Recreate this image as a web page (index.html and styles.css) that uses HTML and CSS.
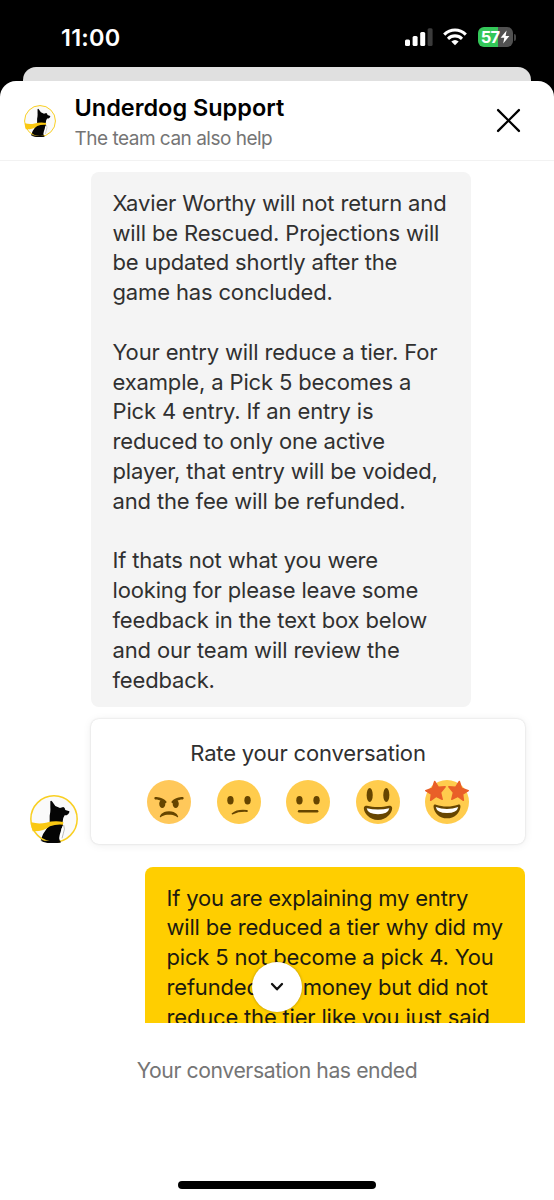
FILE: index.html
```html
<!DOCTYPE html>
<html lang="en">
<head>
<meta charset="utf-8">
<title>Underdog Support</title>
<link rel="stylesheet" href="styles.css">
</head>
<body>
<svg class="defs" aria-hidden="true">
  <symbol id="dog" viewBox="30 42 144 144">
    <circle cx="102" cy="114" r="69" fill="#fafafa"/>
    <path d="M91 61Q93 57 97 62L106 75L120 81L130 78L134 81L136 87L148 91Q149 95 145 99L140 103L134 103Q128 111 128 122L129 132Q123 148 119 162Q116 174 123 184Q102 189 80 184L62 178Q67 158 82 140L89 126L89 104Q92 90 91 80Z" fill="#050505"/>
    <path d="M131 130Q135 142 130 154L127 168L127 182L121 184L118 172L125 154L124 144Z" fill="#fff"/>
    <path d="M131 132Q136 144 130 157L126 172" fill="none" stroke="#777" stroke-width="1.5"/>
    <circle cx="102" cy="114" r="69.5" fill="none" stroke="#f9cf22" stroke-width="4.5"/>
    <path d="M62 179Q70 183 80 185Q102 189 122 184L121 179Z" fill="#050505"/>
    <path d="M34 124Q56 130 78 125Q104 118 130 123L129 131Q108 129 90 136Q72 152 38 151Q33 138 34 124Z" fill="#fac812"/>
  </symbol>
</svg>
<div class="phone">
  <div class="status">
    <div class="time">11:00</div>
    <div class="indicators">
      <svg class="signal" viewBox="0 0 28 19"><rect x="0" y="11.5" width="5" height="6.5" rx="1.5" fill="#fff"/><rect x="7.6" y="8" width="5" height="10" rx="1.5" fill="#fff"/><rect x="15.2" y="4" width="5" height="14" rx="1.5" fill="#fff"/><rect x="22.6" y="0.3" width="5" height="17.7" rx="1.5" fill="#3b3b3b"/></svg>
      <svg class="wifi" viewBox="0 0 24 18"><g fill="none" stroke="#fff" stroke-width="3.1"><path d="M1.2 6.6Q6 2 12 2T22.8 6.6"/><path d="M5 10.8Q8.1 7.9 12 7.9T19 10.8"/></g><path d="M8.3 13.6Q12 10.6 15.7 13.6L12 17.3Z" fill="#fff"/></svg>
      <div class="battery"><span>57</span><svg viewBox="0 0 10 14"><path d="M6.6 0.5L0.6 7.7H4.3L3.2 13.5L9.4 6H5.6Z" fill="#fff"/></svg></div>
      <div class="nub"></div>
    </div>
  </div>
  <div class="backsheet"></div>
  <div class="sheet">
    <header class="header">
      <svg class="avatar-small"><use href="#dog"/></svg>
      <div class="titles">
        <div class="title">Underdog Support</div>
        <div class="subtitle">The team can also help</div>
      </div>
      <svg class="close" viewBox="0 0 24 24"><path d="M2 2L22 22M22 2L2 22" fill="none" stroke="#000" stroke-width="2.2" stroke-linecap="round"/></svg>
    </header>
    <main class="chat">
      <div class="bubble incoming">
        <p>Xavier Worthy will not return and<br>will be Rescued. Projections will<br>be updated shortly after the<br>game has concluded.</p>
        <p>Your entry will reduce a tier. For<br>example, a Pick 5 becomes a<br>Pick 4 entry. If an entry is<br>reduced to only one active<br>player, that entry will be voided,<br>and the fee will be refunded.</p>
        <p>If thats not what you were<br>looking for please leave some<br>feedback in the text box below<br>and our team will review the<br>feedback.</p>
      </div>
      <div class="rating-row">
        <svg class="avatar"><use href="#dog"/></svg>
        <section class="card">
          <div class="card-title">Rate your conversation</div>
          <div class="emojis">
            <svg viewBox="0 0 36 36"><circle cx="18" cy="18" r="18" fill="#ffc85a"/><path fill="#664500" d="M25.485 29.879C25.44 29.7 24.317 25.5 18 25.5c-6.318 0-7.44 4.2-7.485 4.379-.055.217.043.442.237.554.195.109.439.079.6-.077.019-.019 1.954-1.856 6.648-1.856s6.63 1.837 6.648 1.855c.096.095.224.145.352.145.084 0 .169-.021.246-.064.196-.112.294-.339.239-.557zm-9.778-12.586C12.452 14.038 7.221 14 7 14c-.552 0-.999.447-.999.998-.001.552.446 1 .998 1.002.029 0 1.925.022 3.983.737-.593.64-.982 1.634-.982 2.763 0 1.934 1.119 3.5 2.5 3.5s2.5-1.566 2.5-3.5c0-.174-.019-.34-.037-.507.013 0 .025.007.037.007.256 0 .512-.098.707-.293.391-.391.391-1.023 0-1.414zM29 14c-.221 0-5.451.038-8.707 3.293-.391.391-.391 1.023 0 1.414.195.195.451.293.707.293.013 0 .024-.007.036-.007-.016.167-.036.333-.036.507 0 1.934 1.119 3.5 2.5 3.5s2.5-1.566 2.5-3.5c0-1.129-.389-2.123-.982-2.763 2.058-.715 3.954-.737 3.984-.737.551-.002.998-.45.997-1.002-.001-.551-.447-.998-.999-.998z"/></svg>
            <svg viewBox="0 0 36 36"><circle cx="18" cy="18" r="18" fill="#ffcc4d"/><g fill="#664500"><ellipse cx="11" cy="16.5" rx="2.6" ry="3.5"/><ellipse cx="25" cy="16.5" rx="2.6" ry="3.5"/><path d="M12.2 27.2Q16.5 23.6 24.5 24.6Q25.6 24.9 25.2 25.8Q25 26.2 24.3 26.1Q17.5 25.8 13.2 28.1Q12.3 28.5 12 27.9Q11.8 27.5 12.2 27.2Z"/></g></svg>
            <svg viewBox="0 0 36 36"><circle cx="18" cy="18" r="18" fill="#ffcc4d"/><g fill="#664500"><ellipse cx="11" cy="16.5" rx="2.6" ry="3.5"/><ellipse cx="25" cy="16.5" rx="2.6" ry="3.5"/><rect x="9.7" y="24.6" width="16.8" height="2" rx="1"/></g></svg>
            <svg viewBox="0 0 36 36"><circle cx="18" cy="18" r="18" fill="#ffcc4d"/><g fill="#664500"><ellipse cx="11.2" cy="12.3" rx="2.5" ry="5.8"/><ellipse cx="24.8" cy="12.3" rx="2.5" ry="5.8"/><path d="M18 22C14.4 22 12 21.6 9 21C8.3 20.9 6.4 21 6.4 23C6.4 27 11 32.8 18 32.8S29.6 27 29.6 23C29.6 21 27.7 20.9 27 21C24 21.6 21.6 22 18 22Z"/></g><path d="M8.7 23.2Q18 25.2 27.3 23.2Q26.3 28 18 28T8.7 23.2Z" fill="#fff"/></svg>
            <svg viewBox="0 0 36 36"><circle cx="18" cy="18" r="18" fill="#ffcc4d"/><path d="M18 21.7C14.5 21.7 12 21.2 9 20.2C7.9 19.9 6.8 20.2 7 22C7.5 27 12 31.3 18 31.3S28.5 27 29 22C29.2 20.2 28.1 19.9 27 20.2C24 21.2 21.5 21.7 18 21.7Z" fill="#664500"/><path d="M8.8 22Q18 25.4 27.2 22Q26.3 27 18 27T8.8 22Z" fill="#fff"/><g fill="#e95f28" stroke="#e95f28" stroke-width="1.2" stroke-linejoin="round"><path id="star" d="M7.9 1.2L11 6L16.5 5.6L12.7 10.2L14.1 15.8L9.1 13.4L4.6 16.6L5.2 11.5L.6 8.7L6.1 6.7Z"/><use href="#star" transform="matrix(-1 0 0 1 36 0)"/></g></svg>
          </div>
        </section>
      </div>
      <div class="bubble outgoing">
        <p>If you are explaining my entry<br>will be reduced a tier why did my<br>pick 5 not become a pick 4. You<br>refunded my money but did not<br>reduce the tier like you just said</p>
      </div>
      <button class="scroll-down" aria-label="Scroll down"><svg viewBox="0 0 14 10"><path d="M2 2L7 7.3L12 2" fill="none" stroke="#111" stroke-width="2.3" stroke-linecap="round" stroke-linejoin="round"/></svg></button>
    </main>
    <footer class="footer">
      <div class="ended">Your conversation has ended</div>
      <div class="home"></div>
    </footer>
  </div>
</div>
</body>
</html>
```
FILE: styles.css
```css
* { box-sizing: border-box; }
body { margin: 0; background: #000; font-family: Inter, "Liberation Sans", sans-serif; }
p { margin: 0; }
svg { display: block; flex: none; }
.defs { position: absolute; width: 0; height: 0; }
.phone { width: 554px; height: 1200px; display: flex; flex-direction: column; background: #000; overflow: hidden; }
.status { height: 67px; padding: 7px 38px 0 61px; display: flex; justify-content: space-between; align-items: center; }
.time { color: #fff; font-size: 23.5px; font-weight: 600; letter-spacing: 0.2px; }
.indicators { display: flex; align-items: center; }
.signal { width: 28px; height: 19px; margin-right: 10px; }
.wifi { width: 24px; height: 18px; margin-right: 11px; }
.battery { width: 35px; height: 20px; border-radius: 6px; background: linear-gradient(90deg, #34c759 57%, #515151 57%); color: #fff; display: flex; align-items: center; justify-content: center; font-size: 16.5px; font-weight: 700; letter-spacing: -0.8px; }
.battery svg { width: 10px; height: 14px; margin-left: 1px; }
.nub { width: 2px; height: 7px; margin-left: 1px; border-radius: 0 2px 2px 0; background: #444; }
.backsheet { height: 14px; margin: 0 23px; border-radius: 13px 13px 0 0; background: #e0e0e0; }
.sheet { flex: 1; display: flex; flex-direction: column; min-height: 0; background: #fff; border-radius: 16px 16px 0 0; }
.header { height: 80px; flex: none; border-bottom: 1px solid #f2f2f2; display: flex; align-items: center; padding: 0 33px 0 24px; }
.avatar-small { width: 32px; height: 32px; margin-right: 18.5px; }
.titles { flex: 1; white-space: nowrap; padding-top: 5px; }
.title { font-size: 23.5px; font-weight: 600; line-height: 31px; letter-spacing: -0.02px; color: #000; }
.subtitle { font-size: 19px; line-height: 31px; letter-spacing: -0.5px; color: #757575; }
.close { width: 25px; height: 25px; }
.chat { position: relative; height: 862px; flex: none; overflow: hidden; padding: 11px 29px 0; display: flex; flex-direction: column; }
.bubble { width: 380px; flex: none; border-radius: 8px; padding: 16.9px 21.5px 0; font-size: 22px; line-height: 29.8px; letter-spacing: -0.15px; white-space: nowrap; }
.bubble p + p { margin-top: 29.8px; }
.incoming { height: 535px; margin-left: 62px; background: #f4f4f4; color: #303030; }
.outgoing { height: 190px; margin-left: auto; margin-top: 23px; background: #ffce00; color: #1c1a10; letter-spacing: -0.18px; padding-top: 16.5px; }
.rating-row { display: flex; align-items: flex-end; justify-content: space-between; margin-top: 12px; flex: none; }
.avatar { width: 48px; height: 48px; margin: 0 0 1px 1px; }
.card { width: 434px; height: 125px; border-radius: 8px; background: #fff; box-shadow: 0 0 2px rgba(0,0,0,.16), 0 1px 10px rgba(0,0,0,.07); padding-top: 19px; text-align: center; }
.card-title { font-size: 22px; line-height: 30px; letter-spacing: -0.17px; color: #303030; }
.emojis { display: flex; justify-content: center; gap: 25.5px; margin: 12px 0 0; }
.emojis svg { width: 44px; height: 44px; overflow: visible; }
.scroll-down { position: absolute; left: 252px; top: 801px; width: 50px; height: 50px; padding: 0; border: 0; border-radius: 50%; background: #fff; box-shadow: 0 0 3px rgba(0,0,0,.3); display: flex; align-items: center; justify-content: center; }
.scroll-down svg { width: 14px; height: 10px; }
.footer { flex: 1; display: flex; flex-direction: column; align-items: center; justify-content: space-between; padding: 32px 0 11px; }
.ended { font-size: 21.2px; line-height: 30px; letter-spacing: -0.42px; color: #757575; }
.home { width: 198px; height: 8px; border-radius: 4px; background: #000; }
```
